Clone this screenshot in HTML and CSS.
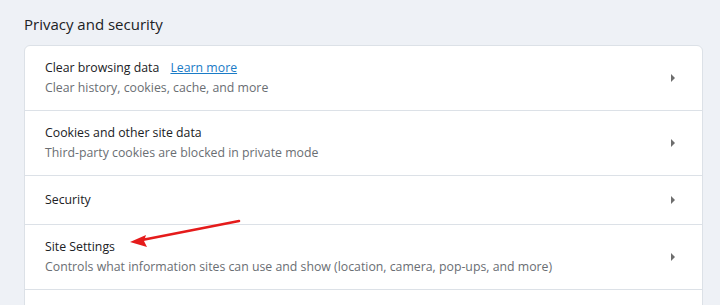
FILE: index.html
```html
<!DOCTYPE html>
<html lang="en">
<head>
    <meta charset="UTF-8">
    <title>Privacy and security</title>
    <link rel="stylesheet" href="styles.css">
</head>
<body>
    <div class="page">
        <h2 class="section-title">Privacy and security</h2>
        <div class="card">
            <div class="row">
                <div class="row-text">
                    <div class="row-label">Clear browsing data <a class="learn" href="#">Learn more</a></div>
                    <div class="row-sub">Clear history, cookies, cache, and more</div>
                </div>
                <svg class="caret" width="6" height="10" viewBox="0 0 6 10"><path d="M1 1 L5 5 L1 9 Z" fill="#6e6e6e"/></svg>
            </div>
            <div class="row">
                <div class="row-text">
                    <div class="row-label">Cookies and other site data</div>
                    <div class="row-sub">Third-party cookies are blocked in private mode</div>
                </div>
                <svg class="caret" width="6" height="10" viewBox="0 0 6 10"><path d="M1 1 L5 5 L1 9 Z" fill="#6e6e6e"/></svg>
            </div>
            <div class="row">
                <div class="row-text">
                    <div class="row-label">Security</div>
                </div>
                <svg class="caret" width="6" height="10" viewBox="0 0 6 10"><path d="M1 1 L5 5 L1 9 Z" fill="#6e6e6e"/></svg>
            </div>
            <div class="row">
                <div class="row-text">
                    <div class="row-label">Site Settings</div>
                    <div class="row-sub">Controls what information sites can use and show (location, camera, pop-ups, and more)</div>
                </div>
                <svg class="caret" width="6" height="10" viewBox="0 0 6 10"><path d="M1 1 L5 5 L1 9 Z" fill="#6e6e6e"/></svg>
            </div>
            <div class="row"></div>
        </div>
    </div>

    <!-- annotation arrow drawn over the screenshot -->
    <svg class="pointer" width="720" height="305" viewBox="0 0 720 305">
        <line x1="239" y1="221" x2="142" y2="240" stroke="#e51b1b" stroke-width="2.6" stroke-linecap="round"/>
        <path d="M130 242 L146 235 L144 241 L147 247 Z" fill="#e51b1b"/>
    </svg>
</body>
</html>
```

FILE: styles.css
```css
body {
    margin: 0;
    background-color: #eef1f6;
    font-family: "Open Sans", "Noto Sans", sans-serif;
    color: #202124;
    overflow: hidden;
}
.page {
    padding: 12px 17px 0 24px;
}
.section-title {
    margin: 0 0 8px 0;
    font-size: 15px;
    font-weight: 400;
    line-height: 25px;
    color: #202124;
}
.card {
    background-color: #fff;
    border: 1px solid #dce1e7;
    border-radius: 6px;
}
.row {
    display: flex;
    align-items: center;
    box-sizing: border-box;
    min-height: 49px;
    padding: 12px 26px 12px 20px;
    border-top: 1px solid #dce1e7;
}
.row:first-child {
    border-top: none;
    min-height: 64px;
}
.row-text {
    flex: 1;
}
.row-label {
    font-size: 12.3px;
    line-height: 20px;
    color: #202124;
}
.row-sub {
    font-size: 12.3px;
    line-height: 20px;
    color: #6a6e73;
}
.learn {
    margin-left: 8px;
    color: #1a7bc6;
    text-decoration: underline;
}
.caret {
    display: block;
}
.pointer {
    position: absolute;
    left: 0;
    top: 0;
}
```
